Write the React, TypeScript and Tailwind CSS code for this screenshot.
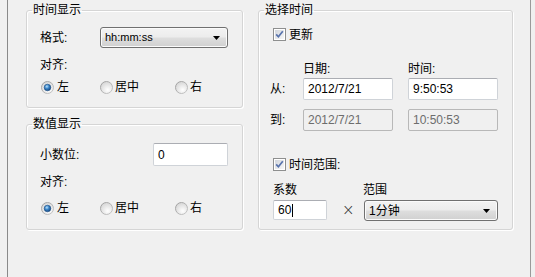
import type { ReactNode } from 'react'

const cjk = "font-['Liberation_Sans','Noto_Sans_CJK_SC',sans-serif]"

/** Win7 风格单选按钮 */
function Radio({ checked }: { checked?: boolean }) {
  return (
    <svg width="13" height="13" viewBox="0 0 13 13" className="shrink-0">
      <defs>
        <linearGradient id="rOuter" x1="0" y1="0" x2="1" y2="1">
          <stop offset="0" stopColor="#9c9c9c" />
          <stop offset="1" stopColor="#c8c8c8" />
        </linearGradient>
        <radialGradient id="rFill" cx="0.6" cy="0.7" r="0.7">
          <stop offset="0" stopColor="#ffffff" />
          <stop offset="1" stopColor="#d6d6d6" />
        </radialGradient>
        <radialGradient id="rDot" cx="0.4" cy="0.35" r="0.7">
          <stop offset="0" stopColor="#b9e2fb" />
          <stop offset="0.45" stopColor="#3b85c8" />
          <stop offset="1" stopColor="#123f74" />
        </radialGradient>
      </defs>
      <circle cx="6.5" cy="6.5" r="6" fill="url(#rFill)" stroke="url(#rOuter)" strokeWidth="1" />
      {checked && <circle cx="6.5" cy="6.5" r="3.3" fill="url(#rDot)" stroke="#1a4d86" strokeWidth="0.6" />}
    </svg>
  )
}

/** Win7 风格复选框 (已勾选) */
function Check() {
  return (
    <svg width="13" height="13" viewBox="0 0 13 13" className="shrink-0">
      <defs>
        <linearGradient id="cFill" x1="0" y1="0" x2="1" y2="1">
          <stop offset="0" stopColor="#d2d6dc" />
          <stop offset="1" stopColor="#f7f7f7" />
        </linearGradient>
      </defs>
      <rect x="0.5" y="0.5" width="12" height="12" fill="#fff" stroke="#8e8f8f" />
      <rect x="2" y="2" width="9" height="9" fill="url(#cFill)" />
      <path d="M3.2 6.4 L5.4 8.8 L9.8 3.3" fill="none" stroke="#5873ad" strokeWidth="1.7" />
    </svg>
  )
}

function Combo({ children, className = '', textClass = '' }: { children: ReactNode; className?: string; textClass?: string }) {
  return (
    <div
      className={`flex items-center justify-between rounded-[3px] border border-[#707070] bg-[linear-gradient(to_bottom,#f3f3f3_0%,#ececec_48%,#dedede_52%,#d0d0d0_100%)] shadow-[inset_0_0_0_1px_#fbfbfb] pl-[4px] pr-[7px] ${className}`}
    >
      <span className={textClass}>{children}</span>
      <svg width="7" height="4" viewBox="0 0 7 4">
        <path d="M0 0 H7 L3.5 4 Z" fill="#000" />
      </svg>
    </div>
  )
}

function Input({ children, className = '', disabled }: { children?: ReactNode; className?: string; disabled?: boolean }) {
  return (
    <div
      className={`flex items-center rounded-[2px] border pl-[4px] font-['Liberation_Sans',sans-serif] text-[12px] ${
        disabled
          ? 'border-[#b8b8b8] bg-[#f0f0f0] text-[#6d6d6d]'
          : 'border-[#cfd3d8] border-t-[#abadb3] bg-white text-black'
      } ${className}`}
    >
      {children}
    </div>
  )
}

function Group({ title, className = '', children }: { title: string; className?: string; children: ReactNode }) {
  return (
    <fieldset
      className={`rounded-[3px] border border-[#d5d5d5] shadow-[inset_1px_1px_0_#fff,1px_1px_0_#fff] ${className}`}
    >
      <legend className="ml-[5px] px-[1px] text-[12px] leading-[16px]">{title}</legend>
      {children}
    </fieldset>
  )
}

function RadioRow() {
  return (
    <div className="flex h-[16px] items-center text-[12px] leading-[16px]">
      <div className="ml-[1px] flex w-[59px] items-center gap-[3px]">
        <Radio checked />
        <span>左</span>
      </div>
      <div className="flex w-[75px] items-center gap-[2px]">
        <Radio />
        <span>居中</span>
      </div>
      <div className="flex items-center gap-[2px]">
        <Radio />
        <span>右</span>
      </div>
    </div>
  )
}

export default function App() {
  return (
    <div className={`flex h-[277px] w-[535px] overflow-hidden bg-[#f0f0f0] pl-[7px] text-black ${cjk}`}>
      <div className="flex h-full w-[524px] shrink-0 gap-[15px] border-x border-l-[#8a8a8a] border-r-[#9a9a9a] pl-[18px] pt-[2px]">
        {/* 左列 */}
        <div className="flex w-[217px] flex-col gap-[8px]">
          <Group title="时间显示" className="h-[106px]">
            <div className="pl-[13px]">
              <div className="mt-[9px] flex h-[21px] items-center text-[12px]">
                <span className="w-[60px]">格式:</span>
                <Combo className="h-[21px] w-[128px]" textClass="font-['Liberation_Sans_Narrow','Liberation_Sans',sans-serif] text-[11px]">
                  hh:mm:ss
                </Combo>
              </div>
              <div className="mt-[9px] text-[12px] leading-[16px]">对齐:</div>
              <div className="mt-[6px]">
                <RadioRow />
              </div>
            </div>
          </Group>
          <Group title="数值显示" className="h-[114px]">
            <div className="pl-[13px]">
              <div className="mt-[11px] flex h-[23px] items-center text-[12px]">
                <span className="w-[113px]">小数位:</span>
                <Input className="h-[23px] w-[75px]">0</Input>
              </div>
              <div className="mt-[8px] text-[12px] leading-[16px]">对齐:</div>
              <div className="mt-[10px]">
                <RadioRow />
              </div>
            </div>
          </Group>
        </div>

        {/* 右列 */}
        <Group title="选择时间" className="h-[228px] w-[255px]">
          <div className="pl-[11px] text-[12px] leading-[16px]">
            <div className="ml-[3px] mt-[10px] flex h-[13px] items-center gap-[3px]">
              <Check />
              <span>更新</span>
            </div>
            <div className="mt-[20px] flex">
              <span className="ml-[33px] w-[105px]">日期:</span>
              <span>时间:</span>
            </div>
            <div className="mt-[1px] flex h-[22px] items-center">
              <span className="w-[33px]">从:</span>
              <Input className="h-[22px] w-[90px]">2012/7/21</Input>
              <Input className="ml-[15px] h-[22px] w-[90px]">9:50:53</Input>
            </div>
            <div className="mt-[9px] flex h-[22px] items-center">
              <span className="w-[33px]">到:</span>
              <Input disabled className="h-[22px] w-[90px]">2012/7/21</Input>
              <Input disabled className="ml-[15px] h-[22px] w-[90px]">10:50:53</Input>
            </div>
            <div className="ml-[3px] mt-[27px] flex h-[13px] items-center gap-[3px]">
              <Check />
              <span>时间范围:</span>
            </div>
            <div className="mt-[11px] flex">
              <span className="ml-[3px] w-[90px]">系数</span>
              <span>范围</span>
            </div>
            <div className="mt-[2px] flex items-start">
              <Input className="ml-[3px] h-[20px] w-[54px] border-[#7eb4ea] border-t-[#569de5]">
                60<span className="ml-[1px] h-[13px] w-px bg-black" />
              </Input>
              <span className="ml-[15px] mt-[1px] w-[22px] font-['DejaVu_Sans',sans-serif] text-[15px] font-light leading-[18px] text-[#333]">
                ×
              </span>
              <Combo className="h-[21px] w-[134px]" textClass="text-[12px]">
                1分钟
              </Combo>
            </div>
          </div>
        </Group>
      </div>
    </div>
  )
}
